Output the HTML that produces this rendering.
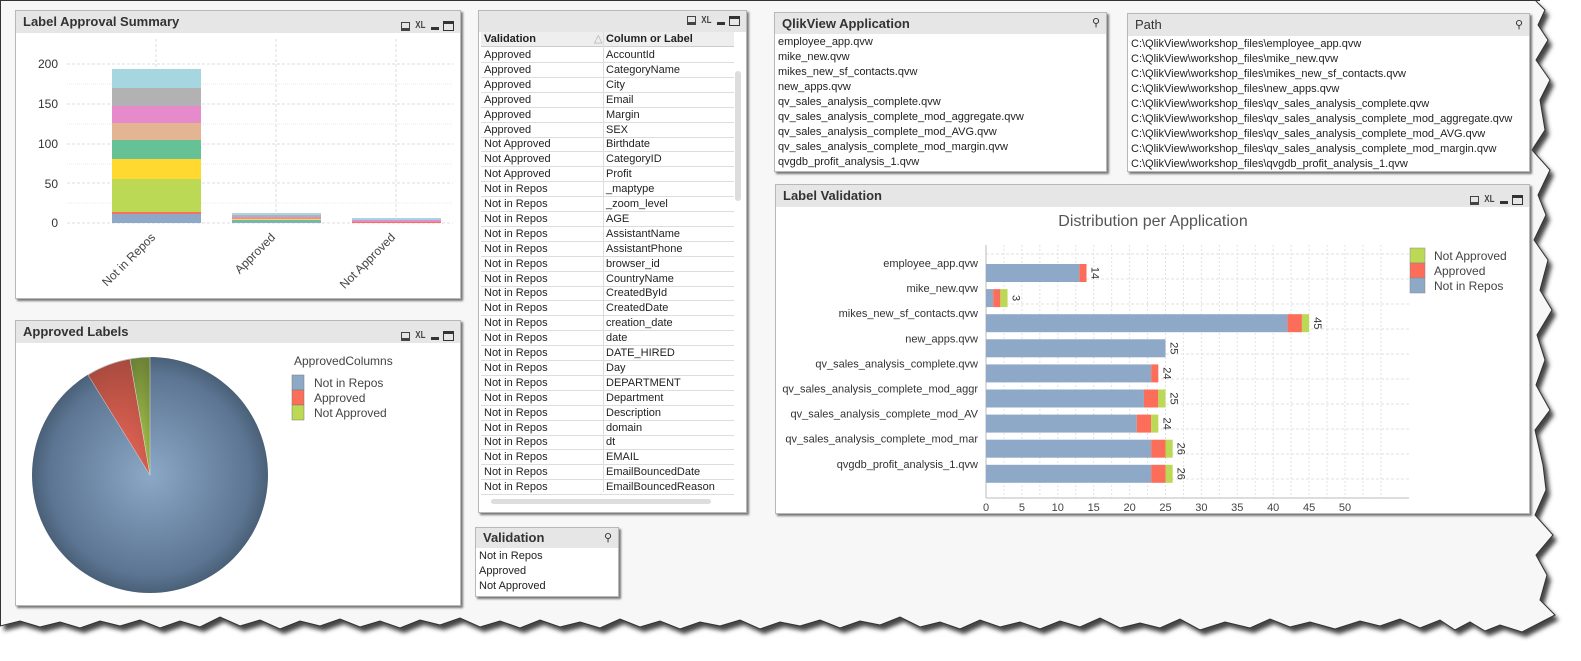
<!DOCTYPE html>
<html><head><meta charset="utf-8"><style>
*{margin:0;padding:0;box-sizing:border-box}
body{width:1581px;height:661px;background:#fff;position:relative;overflow:hidden;font-family:"Liberation Sans",sans-serif;color:#222}
.p{position:absolute;background:#fff;border:1px solid #b8b8b8;box-shadow:2px 2px 2px #777}
.cap{position:absolute;left:0;right:0;top:0;background:#e6e6e6;font-size:13px;font-weight:bold;color:#333;padding-left:7px}
.ic{position:absolute;right:6px;top:4px;font-size:10px;color:#444;display:flex;gap:4px;align-items:center}
.pr{width:9px;height:9px;border:1px solid #444;border-bottom-width:3px}
.mn{width:8px;height:3px;background:#333;margin-top:5px}
.mx{width:11px;height:10px;border:1px solid #333;border-top-width:3px}
.xl{font-size:10px;transform:scaleX(.8)}
.row{position:absolute;left:2px;width:253px;height:15px;border-bottom:1px solid #ddd;font-size:11px;line-height:14px}
.row span{position:absolute;top:0}
.lst div{font-size:11px;height:15px;line-height:15px;padding-left:3px;white-space:nowrap}
</style></head><body>
<svg width="1581" height="661" style="position:absolute;left:0;top:0">
<defs><filter id="b"><feGaussianBlur stdDeviation="2"/></filter></defs>
<polygon transform="translate(4,5)" filter="url(#b)" fill="#444" points="0,0 1535,0 1545,10 1538,25 1548,40 1536,60 1550,80 1540,100 1545,130 1532,150 1550,170 1538,195 1546,215 1534,240 1548,260 1540,290 1552,310 1537,335 1545,360 1536,385 1550,410 1535,430 1543,465 1546,490 1535,515 1553,535 1536,555 1547,575 1540,600 1555,615 1522,632 1500,625 1485,631 1470,622 1455,630 1440,620 1420,628 1400,619 1380,626 1360,621 1335,629 1310,622 1290,627 1270,619 1250,628 1225,622 1200,630 1180,619 1160,628 1140,623 1120,628 1100,618 1080,627 1060,621 1040,629 1020,622 1000,627 980,620 960,629 940,622 920,627 900,617 880,625 860,621 840,628 820,620 800,626 780,622 760,629 740,620 720,626 700,622 680,629 660,621 640,627 620,619 600,628 580,622 560,627 540,620 520,628 500,621 480,627 460,618 440,625 420,620 400,628 380,621 360,627 340,619 320,626 300,621 280,629 260,620 240,626 220,617 200,627 180,621 160,628 140,620 120,626 100,621 80,628 60,622 40,627 20,621 0,626"/>
<polygon fill="#f7f7f7" stroke="#333" stroke-width="1" points="0,0 1535,0 1545,10 1538,25 1548,40 1536,60 1550,80 1540,100 1545,130 1532,150 1550,170 1538,195 1546,215 1534,240 1548,260 1540,290 1552,310 1537,335 1545,360 1536,385 1550,410 1535,430 1543,465 1546,490 1535,515 1553,535 1536,555 1547,575 1540,600 1555,615 1522,632 1500,625 1485,631 1470,622 1455,630 1440,620 1420,628 1400,619 1380,626 1360,621 1335,629 1310,622 1290,627 1270,619 1250,628 1225,622 1200,630 1180,619 1160,628 1140,623 1120,628 1100,618 1080,627 1060,621 1040,629 1020,622 1000,627 980,620 960,629 940,622 920,627 900,617 880,625 860,621 840,628 820,620 800,626 780,622 760,629 740,620 720,626 700,622 680,629 660,621 640,627 620,619 600,628 580,622 560,627 540,620 520,628 500,621 480,627 460,618 440,625 420,620 400,628 380,621 360,627 340,619 320,626 300,621 280,629 260,620 240,626 220,617 200,627 180,621 160,628 140,620 120,626 100,621 80,628 60,622 40,627 20,621 0,626"/>
<line x1="0" y1="0" x2="1540" y2="0" stroke="#333" stroke-width="2"/>
<line x1="0" y1="0" x2="0" y2="626" stroke="#333" stroke-width="2"/>
</svg>

<!-- Label Approval Summary -->
<div class="p" style="left:15px;top:10px;width:446px;height:289px">
<div class="cap" style="height:22px;line-height:22px">Label Approval Summary<div class="ic"><div class="pr"></div><span class="xl">XL</span><div class="mn"></div><div class="mx"></div></div></div>
</div>
<svg width="446" height="289" style="position:absolute;left:15px;top:10px;font-family:'Liberation Sans',sans-serif">
<g stroke="#ddd" stroke-dasharray="3,2">
<line x1="52" y1="54" x2="438" y2="54"/><line x1="52" y1="94" x2="438" y2="94"/><line x1="52" y1="134" x2="438" y2="134"/><line x1="52" y1="173" x2="438" y2="173"/><line x1="52" y1="213" x2="438" y2="213"/>
<line x1="141" y1="29" x2="141" y2="213"/><line x1="261" y1="29" x2="261" y2="213"/><line x1="381" y1="29" x2="381" y2="213"/>
</g>
<g stroke="#e8e8e8" stroke-dasharray="1,1"><line x1="52" y1="74" x2="438" y2="74"/><line x1="52" y1="114" x2="438" y2="114"/><line x1="52" y1="154" x2="438" y2="154"/><line x1="52" y1="193" x2="438" y2="193"/></g>
<g font-size="12" fill="#333" text-anchor="end"><text x="43" y="58">200</text><text x="43" y="98">150</text><text x="43" y="138">100</text><text x="43" y="178">50</text><text x="43" y="217">0</text></g>
<rect x="97" y="59" width="89" height="19" fill="#a6d7e0"/>
<rect x="97" y="78" width="89" height="18" fill="#b2b2b2"/>
<rect x="97" y="96" width="89" height="17" fill="#e68acc"/>
<rect x="97" y="113" width="89" height="17" fill="#e3b593"/>
<rect x="97" y="130" width="89" height="19" fill="#66c295"/>
<rect x="97" y="149" width="89" height="20" fill="#ffd92f"/>
<rect x="97" y="169" width="89" height="33" fill="#bcd955"/>
<rect x="97" y="202" width="89" height="2" fill="#fc6e5a"/>
<rect x="97" y="204" width="89" height="9" fill="#8ea9c8"/>
<rect x="217" y="203" width="89" height="2" fill="#a6d7e0"/><rect x="217" y="205" width="89" height="2" fill="#b2b2b2"/><rect x="217" y="207" width="89" height="2" fill="#e68acc"/><rect x="217" y="209" width="89" height="1" fill="#ffd92f"/><rect x="217" y="210" width="89" height="2" fill="#66c295"/><rect x="217" y="212" width="89" height="1" fill="#8ea9c8"/>
<rect x="337" y="208" width="89" height="2" fill="#a6d7e0"/><rect x="337" y="210" width="89" height="2" fill="#e68acc"/><rect x="337" y="212" width="89" height="1" fill="#fc6e5a"/>
<g font-size="12" fill="#444" text-anchor="end"><text transform="translate(141,228) rotate(-45)">Not in Repos</text><text transform="translate(261,228) rotate(-45)">Approved</text><text transform="translate(381,228) rotate(-45)">Not Approved</text></g>
</svg>

<!-- Approved Labels -->
<div class="p" style="left:15px;top:320px;width:446px;height:286px">
<div class="cap" style="height:22px;line-height:22px">Approved Labels<div class="ic"><div class="pr"></div><span class="xl">XL</span><div class="mn"></div><div class="mx"></div></div></div>
</div>
<svg width="446" height="286" style="position:absolute;left:15px;top:320px;font-family:'Liberation Sans',sans-serif">
<defs><radialGradient id="g" cx="0.5" cy="0.5" r="0.5"><stop offset="0" stop-color="#8ba8c6"/><stop offset="0.85" stop-color="#5c7592"/><stop offset="1" stop-color="#4a6078"/></radialGradient>
<radialGradient id="gr" cx="0.5" cy="1" r="1"><stop offset="0" stop-color="#f06a5a"/><stop offset="1" stop-color="#a84a3e"/></radialGradient>
<radialGradient id="gg" cx="0.5" cy="1" r="1"><stop offset="0" stop-color="#b6d450"/><stop offset="1" stop-color="#6c8236"/></radialGradient></defs>
<ellipse cx="135" cy="155" rx="118" ry="118" fill="url(#g)"/>
<path d="M135,155 L73,55 A118,118 0 0 1 115,39 Z" fill="url(#gr)" stroke="#ddd" stroke-width=".5"/>
<path d="M135,155 L115,39 A118,118 0 0 1 135,37 Z" fill="url(#gg)" stroke="#ddd" stroke-width=".5"/>
<text x="279" y="45" font-size="12" fill="#444">ApprovedColumns</text>
<rect x="277" y="55" width="12" height="15" fill="#8ea9c8" stroke="#777" stroke-width=".5"/>
<rect x="277" y="70" width="12" height="15" fill="#fc6e5a" stroke="#777" stroke-width=".5"/>
<rect x="277" y="85" width="12" height="15" fill="#bcd955" stroke="#777" stroke-width=".5"/>
<g font-size="12" fill="#444"><text x="299" y="67">Not in Repos</text><text x="299" y="82">Approved</text><text x="299" y="97">Not Approved</text></g>
</svg>

<!-- Table -->
<div class="p" style="left:478px;top:10px;width:269px;height:503px">
<div class="cap" style="height:21px"><div class="ic"><div class="pr"></div><span class="xl">XL</span><div class="mn"></div><div class="mx"></div></div></div>
<div style="position:absolute;left:2px;top:21px;width:253px;height:15px;background:#eee;border-bottom:1px solid #ccc;font-size:11px;font-weight:bold;line-height:14px"><span style="position:absolute;left:3px">Validation</span><span style="position:absolute;left:113px;color:#aaa;font-weight:normal">△</span><span style="position:absolute;left:125px">Column or Label</span></div>
<div id="rows"></div>
<div style="position:absolute;left:124px;top:21px;width:1px;height:460px;background:#ddd"></div>
<div style="position:absolute;right:5px;width:6px;height:130px;background:#ddd;border-radius:3px;top:60px"></div>
<div style="position:absolute;left:12px;top:488px;width:220px;height:5px;background:#ddd;border-radius:3px"></div>
</div>

<!-- Validation listbox -->
<div class="p" style="left:475px;top:527px;width:144px;height:70px">
<div class="cap" style="height:20px;line-height:20px">Validation<span style="position:absolute;right:6px;font-weight:normal;font-size:11px">⚲</span></div>
<div class="lst" style="position:absolute;top:21px;left:0">
<div>Not in Repos</div><div>Approved</div><div>Not Approved</div></div>
</div>

<!-- QlikView Application -->
<div class="p" style="left:774px;top:12px;width:333px;height:160px">
<div class="cap" style="height:21px;line-height:21px">QlikView Application<span style="position:absolute;right:6px;font-weight:normal;font-size:11px">⚲</span></div>
<div class="lst" style="position:absolute;top:22px;left:0">
<div>employee_app.qvw</div><div>mike_new.qvw</div><div>mikes_new_sf_contacts.qvw</div><div>new_apps.qvw</div><div>qv_sales_analysis_complete.qvw</div><div>qv_sales_analysis_complete_mod_aggregate.qvw</div><div>qv_sales_analysis_complete_mod_AVG.qvw</div><div>qv_sales_analysis_complete_mod_margin.qvw</div><div>qvgdb_profit_analysis_1.qvw</div></div>
</div>

<!-- Path -->
<div class="p" style="left:1127px;top:13px;width:403px;height:159px">
<div class="cap" style="height:22px;line-height:22px;font-weight:normal">Path<span style="position:absolute;right:6px;font-size:11px">⚲</span></div>
<div class="lst" style="position:absolute;top:23px;left:0">
<div>C:\QlikView\workshop_files\employee_app.qvw</div><div>C:\QlikView\workshop_files\mike_new.qvw</div><div>C:\QlikView\workshop_files\mikes_new_sf_contacts.qvw</div><div>C:\QlikView\workshop_files\new_apps.qvw</div><div>C:\QlikView\workshop_files\qv_sales_analysis_complete.qvw</div><div>C:\QlikView\workshop_files\qv_sales_analysis_complete_mod_aggregate.qvw</div><div>C:\QlikView\workshop_files\qv_sales_analysis_complete_mod_AVG.qvw</div><div>C:\QlikView\workshop_files\qv_sales_analysis_complete_mod_margin.qvw</div><div>C:\QlikView\workshop_files\qvgdb_profit_analysis_1.qvw</div></div>
</div>

<!-- Label Validation -->
<div class="p" style="left:775px;top:184px;width:755px;height:330px">
<div class="cap" style="height:22px;line-height:22px">Label Validation<div class="ic"><div class="pr"></div><span class="xl">XL</span><div class="mn"></div><div class="mx"></div></div></div>
</div>
<svg id="lv" width="755" height="330" style="position:absolute;left:775px;top:184px;font-family:'Liberation Sans',sans-serif"></svg>

<script>
var d=[["Approved","AccountId"],["Approved","CategoryName"],["Approved","City"],["Approved","Email"],["Approved","Margin"],["Approved","SEX"],["Not Approved","Birthdate"],["Not Approved","CategoryID"],["Not Approved","Profit"]];
["_maptype","_zoom_level","AGE","AssistantName","AssistantPhone","browser_id","CountryName","CreatedById","CreatedDate","creation_date","date","DATE_HIRED","Day","DEPARTMENT","Department","Description","domain","dt","EMAIL","EmailBouncedDate","EmailBouncedReason"].forEach(function(c){d.push(["Not in Repos",c])});
var h="";d.forEach(function(r,i){h+='<div class="row" style="top:'+(37+i*14.9)+'px"><span style="left:3px">'+r[0]+'</span><span style="left:125px">'+r[1]+'</span></div>'});
document.getElementById("rows").innerHTML=h;
var s="",ox=211,k=7.18;
s+='<text x="378" y="42" font-size="16" fill="#555" text-anchor="middle">Distribution per Application</text>';
for(var v=0;v<=55;v+=2.5){var x=ox+v*k;s+='<line x1="'+x+'" y1="61" x2="'+x+'" y2="314" stroke="#e2e2e2" stroke-dasharray="2,2"/>';}
for(var i=0;i<10;i++){var y=70+i*25;s+='<line x1="'+ox+'" y1="'+y+'" x2="634" y2="'+y+'" stroke="#e2e2e2" stroke-dasharray="3,2"/>';}
s+='<line x1="'+ox+'" y1="61" x2="'+ox+'" y2="314" stroke="#bbb"/><line x1="'+ox+'" y1="314" x2="634" y2="314" stroke="#bbb"/>';
for(var v=0;v<=50;v+=5){s+='<text x="'+(ox+v*k)+'" y="327" font-size="11" fill="#444" text-anchor="middle">'+v+'</text>';}
var b=[["employee_app.qvw",13,1,0],["mike_new.qvw",1,1,1],["mikes_new_sf_contacts.qvw",42,2,1],["new_apps.qvw",25,0,0],["qv_sales_analysis_complete.qvw",23,1,0],["qv_sales_analysis_complete_mod_aggr",22,2,1],["qv_sales_analysis_complete_mod_AV",21,2,1],["qv_sales_analysis_complete_mod_mar",23,2,1],["qvgdb_profit_analysis_1.qvw",23,2,1]];
b.forEach(function(r,i){var y=80+i*25.1,x=ox;
s+='<text x="203" y="'+(y+3)+'" font-size="11" fill="#333" text-anchor="end">'+r[0]+'</text>';
[[r[1],"#8ea9c8"],[r[2],"#fc6e5a"],[r[3],"#bcd955"]].forEach(function(q){if(q[0]){s+='<rect x="'+x+'" y="'+y+'" width="'+(q[0]*k)+'" height="18" fill="'+q[1]+'"/>';x+=q[0]*k;}});
var t=r[1]+r[2]+r[3];s+='<text transform="translate('+(x+5)+','+(y+9)+') rotate(90)" font-size="11" fill="#333" text-anchor="middle">'+t+'</text>';});
s+='<rect x="635" y="64" width="15" height="15" fill="#bcd955" stroke="#888" stroke-width=".5"/><rect x="635" y="79" width="15" height="15" fill="#fc6e5a" stroke="#888" stroke-width=".5"/><rect x="635" y="94" width="15" height="15" fill="#8ea9c8" stroke="#888" stroke-width=".5"/>';
s+='<g font-size="12" fill="#444"><text x="659" y="76">Not Approved</text><text x="659" y="91">Approved</text><text x="659" y="106">Not in Repos</text></g>';
document.getElementById("lv").innerHTML=s;
</script>
</body></html>
